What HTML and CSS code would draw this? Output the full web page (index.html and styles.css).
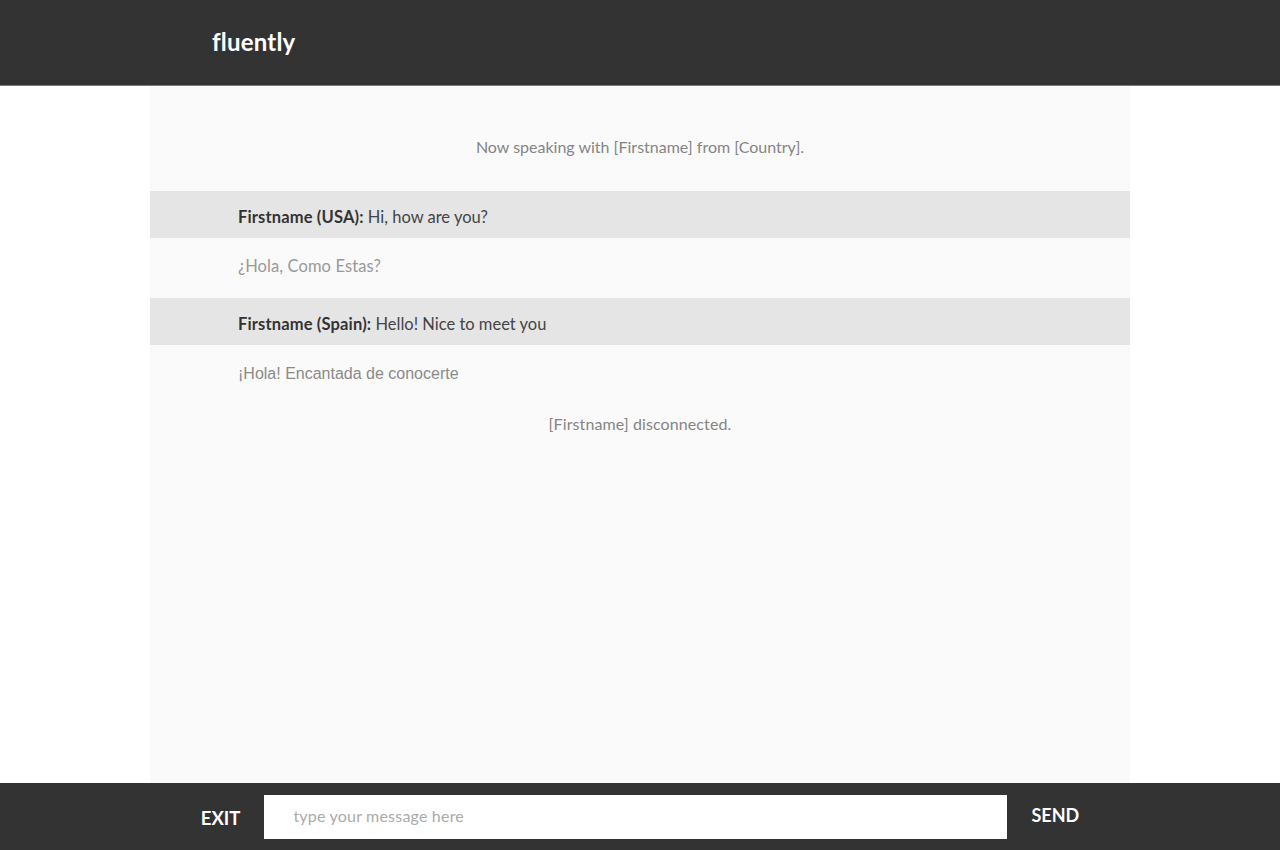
FILE: index.html
```html
<!DOCTYPE html>
<html>
<head>
<meta charset="utf-8">
<title>fluently</title>
<link rel="stylesheet" href="styles.css">
</head>
<body>
<div class="page">
  <header class="topbar">
    <div class="topbar-inner">
      <span class="logo">fluently</span>
    </div>
  </header>
  <main class="chat">
    <div class="notice notice-top">Now speaking with [Firstname] from [Country].</div>
    <div class="msg"><span class="name">Firstname (USA):</span> Hi, how are you?</div>
    <div class="trans">¿Hola, Como Estas?</div>
    <div class="msg"><span class="name">Firstname (Spain):</span> Hello! Nice to meet you</div>
    <div class="trans trans-arial">¡Hola! Encantada de conocerte</div>
    <div class="notice notice-bottom">[Firstname] disconnected.</div>
  </main>
  <footer class="bottombar">
    <div class="bottombar-inner">
      <button class="btn btn-exit">EXIT</button>
      <input class="input" type="text" placeholder="type your message here">
      <button class="btn btn-send">SEND</button>
    </div>
  </footer>
</div>
</body>
</html>
```
FILE: styles.css
```css
html, body {
  margin: 0;
  padding: 0;
  height: 100%;
  background: #ffffff;
  font-family: "Lato", "Open Sans", sans-serif;
}
.page {
  display: flex;
  flex-direction: column;
  height: 850px;
}
.topbar {
  background: #333333;
  height: 85px;
  border-bottom: 1px solid #7a7a7a;
  flex: none;
}
.topbar-inner {
  width: 980px;
  margin: 0 auto;
  padding-left: 62px;
  box-sizing: border-box;
  height: 85px;
  display: flex;
  align-items: center;
}
.logo {
  color: #ffffff;
  font-size: 24px;
  font-weight: 700;
  letter-spacing: 0.2px;
  margin-top: -2px;
}
.chat {
  flex: 1;
  width: 980px;
  margin: 0 auto;
  background: #fafafa;
  font-size: 16px;
}
.notice {
  text-align: center;
  color: #858585;
  line-height: 24px;
}
.notice-top {
  padding-top: 49px;
  padding-bottom: 32px;
}
.notice-bottom {
  margin-top: 7px;
  letter-spacing: 0.1px;
}
.msg {
  background: #e5e5e5;
  padding: 14px 0 9px 88px;
  line-height: 24px;
  font-size: 16.5px;
  color: #444444;
}
.name {
  font-weight: 700;
  color: #333333;
  letter-spacing: 0.15px;
}
.trans {
  padding: 16px 0 20px 88px;
  line-height: 24px;
  font-size: 16.5px;
  letter-spacing: 0.1px;
  color: #999999;
}
.trans-arial {
  font-family: "Liberation Sans", Arial, sans-serif;
  font-size: 16px;
  letter-spacing: 0;
  padding-top: 17px;
  padding-bottom: 19px;
  color: #8a8a8a;
}
.bottombar {
  background: #333333;
  height: 67px;
  flex: none;
}
.bottombar-inner {
  height: 67px;
  display: flex;
  align-items: center;
  justify-content: center;
}
.btn {
  background: none;
  border: 0;
  padding: 0;
  color: #ffffff;
  font-family: "Lato", "Open Sans", sans-serif;
  font-weight: 700;
  font-size: 18px;
  cursor: pointer;
}
.btn-exit {
  font-size: 18.5px;
  margin-top: 2px;
  margin-right: 24px;
}
.btn-send {
  margin-left: 24px;
  margin-top: -3px;
}
.input {
  width: 743px;
  height: 44px;
  box-sizing: border-box;
  border: 0;
  background: #ffffff;
  padding: 0 0 2px 29px;
  font-family: "Lato", "Open Sans", sans-serif;
  font-size: 16px;
  letter-spacing: 0.2px;
  color: #333;
  outline: none;
}
.input::placeholder {
  color: #aaaaaa;
}
```
